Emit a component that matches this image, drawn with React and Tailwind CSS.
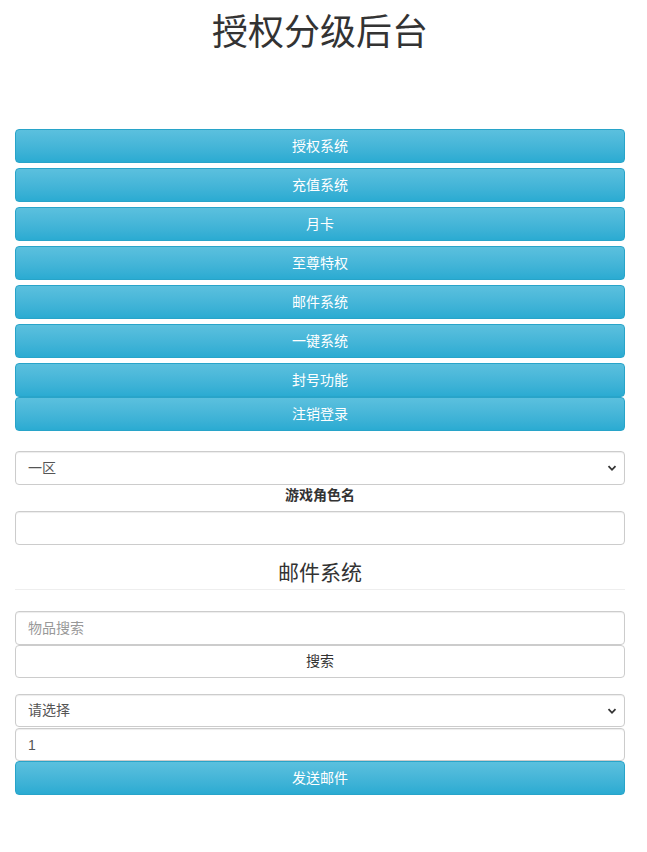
import { useState } from "react";

const menu = ["授权系统", "充值系统", "月卡", "至尊特权", "邮件系统", "一键系统", "封号功能"];

const font = { fontFamily: '"Liberation Sans", "Noto Sans CJK SC", sans-serif' };

function Chevron() {
  return (
    <svg className="pointer-events-none absolute right-[8px] top-1/2 -translate-y-1/2" width="10" height="10" viewBox="0 0 10 10">
      <path d="M1.5 3.2 L5 6.8 L8.5 3.2" fill="none" stroke="#333" strokeWidth="1.8" />
    </svg>
  );
}

export default function App(){
  const [area, setArea] = useState("1");
  const [role, setRole] = useState("");
  const [item, setItem] = useState("");
  const [pick, setPick] = useState("");
  const [count, setCount] = useState("1");

  const btn = "w-full flex items-center justify-center text-white text-[14px] rounded-[4px] border border-[#28a4c9] bg-gradient-to-b from-[#5bc0de] to-[#2aabd2]";
  const field = "block w-full rounded-[4px] border border-[#ccc] bg-white px-[12px] text-[14px] text-[#555] shadow-[inset_0_1px_1px_rgba(0,0,0,0.075)] outline-none";

  return (
    <div className="min-h-[852px] bg-white pl-[15px] pr-[22px] text-[#333]" style={font}>
      <h1 className="pt-[13px] h-[53px] text-center text-[36px] leading-[40px] font-normal text-[#333]">授权分级后台</h1>

      <div className="mt-[76px] flex flex-col">
        {menu.map(m => (
          <button key={m} className={btn + " h-[34px] mb-[5px]"}>{m}</button>
        ))}
        <button className={btn + " h-[34px] -mt-[5px]"}>注销登录</button>
      </div>

      <div className="relative mt-[20px]">
        <select value={area} onChange={e=>setArea(e.target.value)} className={field + " h-[34px] appearance-none"}>
          <option value="1">一区</option>
          <option value="2">二区</option>
        </select>
        <Chevron />
      </div>
      <div className="h-[26px] pt-[1px] text-center text-[14px] leading-[18px] font-bold text-[#333]">游戏角色名</div>
      <input className={field + " h-[34px]"} value={role} onChange={e=>setRole(e.target.value)} />

      <h3 className="h-[45px] pb-[1px] flex items-end justify-center text-[21px] leading-[30px] font-normal text-[#333] border-b border-[#eee]">邮件系统</h3>

      <input className={field + " h-[34px] mt-[21px] placeholder:text-[#999]"} placeholder="物品搜索" value={item} onChange={e=>setItem(e.target.value)} />
      <button className="block w-full h-[33px] rounded-[4px] border border-[#ccc] bg-white text-[14px] text-[#333]">搜索</button>

      <div className="relative mt-[16px]">
        <select value={pick} onChange={e=>setPick(e.target.value)} className={field + " h-[33px] appearance-none"}>
          <option value="">请选择</option>
        </select>
        <Chevron />
      </div>
      <input className={field + " h-[33px] mt-[1px]"} value={count} onChange={e=>setCount(e.target.value)} />
      <button className={btn + " h-[34px]"}>发送邮件</button>
    </div>
  );
}
